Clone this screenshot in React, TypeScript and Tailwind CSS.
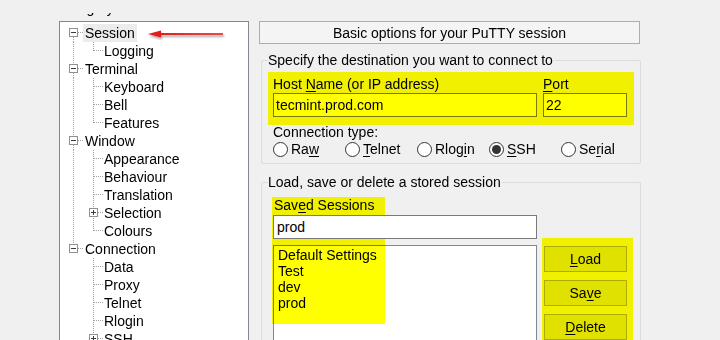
import React from "react";

const font = "font-['Liberation_Sans',Arial,sans-serif]";

type Row = {
  label: string;
  top?: boolean;
  box?: "minus" | "plus";
  trunk: "none" | "down" | "full" | "up";
  branch?: "full" | "half";
  selected?: boolean;
};

const ROWS: Row[] = [
  { label: "Session", top: true, box: "minus", trunk: "down", selected: true },
  { label: "Logging", trunk: "full", branch: "half" },
  { label: "Terminal", top: true, box: "minus", trunk: "full" },
  { label: "Keyboard", trunk: "full", branch: "full" },
  { label: "Bell", trunk: "full", branch: "full" },
  { label: "Features", trunk: "full", branch: "half" },
  { label: "Window", top: true, box: "minus", trunk: "full" },
  { label: "Appearance", trunk: "full", branch: "full" },
  { label: "Behaviour", trunk: "full", branch: "full" },
  { label: "Translation", trunk: "full", branch: "full" },
  { label: "Selection", trunk: "full", branch: "full", box: "plus" },
  { label: "Colours", trunk: "full", branch: "half" },
  { label: "Connection", top: true, box: "minus", trunk: "up" },
  { label: "Data", trunk: "none", branch: "full" },
  { label: "Proxy", trunk: "none", branch: "full" },
  { label: "Telnet", trunk: "none", branch: "full" },
  { label: "Rlogin", trunk: "none", branch: "full" },
  { label: "SSH", trunk: "none", branch: "full", box: "plus" },
];

const DOT = { stroke: "#a0a0a0", strokeDasharray: "1 1", shapeRendering: "crispEdges" as const };

function Box({ x, kind }: { x: number; kind: "minus" | "plus" }) {
  // 9x9 expander box, x = left pixel
  return (
    <g shapeRendering="crispEdges">
      <rect x={x + 0.5} y={4.5} width={8} height={8} fill="#fff" stroke="#919191" />
      <line x1={x + 2} x2={x + 7} y1={8.5} y2={8.5} stroke="#3c3c3c" />
      {kind === "plus" && <line x1={x + 4.5} x2={x + 4.5} y1={6} y2={11} stroke="#3c3c3c" />}
    </g>
  );
}

function TreeRow({ row }: { row: Row }) {
  if (row.top) {
    return (
      <div className="flex h-[18px] items-center">
        <svg width="23" height="18" className="shrink-0">
          {(row.trunk === "full" || row.trunk === "up") && <line x1={13.5} x2={13.5} y1={0} y2={4} {...DOT} />}
          {(row.trunk === "full" || row.trunk === "down") && <line x1={13.5} x2={13.5} y1={13} y2={18} {...DOT} />}
          <line x1={18} x2={23} y1={8.5} y2={8.5} {...DOT} />
          <Box x={9} kind={row.box ?? "minus"} />
        </svg>
        <span className={`px-[2px] leading-[18px] ${row.selected ? "bg-[#ececec]" : ""}`}>{row.label}</span>
      </div>
    );
  }
  return (
    <div className="flex h-[18px] items-center">
      <svg width="44" height="18" className="shrink-0">
        {row.trunk === "full" && <line x1={13.5} x2={13.5} y1={0} y2={18} {...DOT} />}
        <line x1={33.5} x2={33.5} y1={0} y2={row.branch === "half" ? 9 : 18} {...DOT} />
        <line x1={row.box ? 38 : 34} x2={44} y1={8.5} y2={8.5} {...DOT} />
        {row.box && <Box x={29} kind={row.box} />}
      </svg>
      <span className="leading-[18px]">{row.label}</span>
    </div>
  );
}

function Radio({ children, checked }: { children: React.ReactNode; checked?: boolean }) {
  return (
    <div className="flex w-[72px] items-center gap-[3px]">
      <span className="flex h-[15px] w-[15px] items-center justify-center rounded-full border border-[#333333] bg-white">
        {checked && <span className="h-[9px] w-[9px] rounded-full bg-[#333333]" />}
      </span>
      <span>{children}</span>
    </div>
  );
}

const U = ({ children }: { children: React.ReactNode }) => <span className="underline decoration-1 underline-offset-2">{children}</span>;

function Button({ children }: { children: React.ReactNode }) {
  return (
    <div className="flex h-[26px] shrink-0 items-center justify-center border border-[#adadad] bg-[#e1e1e1]">{children}</div>
  );
}

export default function App() {
  return (
    <div className={`relative isolate flex h-[340px] w-[720px] overflow-hidden bg-[#f0f0f0] text-[14px] leading-[16px] text-black ${font}`}>
      {/* category tree */}
      <div className="ml-[59px] flex w-[190px] flex-col">
        {/* label is cut off by the top of the shot: only its descenders show */}
        <div className="h-[21px] shrink-0 pt-[13px]">
          <div className="relative h-[6px] overflow-hidden">
            <div className="absolute -left-[2px] -top-[13px] whitespace-nowrap">Category:</div>
          </div>
        </div>
        <div className="flex-1 border-l border-r border-t border-[#828790] bg-white pt-[2px]">
          {ROWS.map((r) => (
            <TreeRow key={r.label} row={r} />
          ))}
        </div>
      </div>

      {/* session panel */}
      <div className="ml-[10px] mt-[21px] flex w-[382px] flex-col">
        <div className="flex h-[23px] w-[381px] shrink-0 items-center justify-center border border-[#adadad] bg-[#f4f4f4]">
          Basic options for your PuTTY session
        </div>

        <div className="ml-[2px] mt-[16px] flex w-[380px] shrink-0 flex-col rounded-[2px] border border-[#dcdcdc] pb-[5px]">
          <div className="-mt-[9px] ml-[6px] self-start bg-[#f0f0f0] pr-[1px]">Specify the destination you want to connect to</div>
          <div className="ml-[11px] mt-[8px] flex gap-[6px]">
            <div className="flex w-[264px] flex-col">
              <div>
                Host <U>N</U>ame (or IP address)
              </div>
              <div className="mt-[1px] flex h-[24px] items-center border border-[#7a7a7a] bg-white pl-[2px]">tecmint.prod.com</div>
            </div>
            <div className="flex w-[84px] flex-col">
              <div>
                <U>P</U>ort
              </div>
              <div className="mt-[1px] flex h-[24px] items-center border border-[#7a7a7a] bg-white pl-[2px]">22</div>
            </div>
          </div>
          <div className="ml-[11px] mt-[7px]">Connection type:</div>
          <div className="ml-[11px] flex h-[18px] items-center">
            <Radio>
              Ra<U>w</U>
            </Radio>
            <Radio>
              <U>T</U>elnet
            </Radio>
            <Radio>
              Rlog<U>i</U>n
            </Radio>
            <Radio checked>
              <U>S</U>SH
            </Radio>
            <Radio>
              Se<U>r</U>ial
            </Radio>
          </div>
        </div>

        <div className="ml-[2px] mt-[18px] flex min-h-0 w-[380px] flex-1 flex-col rounded-t-[2px] border-l border-r border-t border-[#dcdcdc]">
          <div className="-mt-[9px] ml-[6px] self-start bg-[#f0f0f0] pr-[1px]">Load, save or delete a stored session</div>
          <div className="ml-[11px] mt-[7px] flex gap-[7px]">
            <div className="flex w-[264px] flex-col">
              <div className="pl-[1px]">
                Sav<U>e</U>d Sessions
              </div>
              <div className="relative z-10 mt-[2px] flex h-[24px] shrink-0 items-center border border-[#7a7a7a] bg-white pl-[3px]">prod</div>
              <div className="mt-[6px] h-[120px] shrink-0 border border-[#828790] bg-white pl-[4px] pt-[1px]">
                <div>Default Settings</div>
                <div>Test</div>
                <div>dev</div>
                <div>prod</div>
              </div>
            </div>
            <div className="mt-[49px] flex w-[83px] flex-col gap-[8px]">
              <Button>
                <U>L</U>oad
              </Button>
              <Button>
                Sa<U>v</U>e
              </Button>
              <Button>
                <U>D</U>elete
              </Button>
            </div>
          </div>
        </div>
      </div>

      {/* highlighter marks */}
      <div className="pointer-events-none absolute left-[268px] top-[72px] h-[53px] w-[366px] bg-[#ffff00] mix-blend-multiply" />
      <div className="pointer-events-none absolute left-[272px] top-[197px] h-[127px] w-[113px] bg-[#ffff00] mix-blend-multiply" />
      <div className="pointer-events-none absolute left-[542px] top-[238px] h-[110px] w-[91px] bg-[#ffff00] mix-blend-multiply" />

      {/* red arrow */}
      <svg className="pointer-events-none absolute left-[140px] top-[24px]" width="92" height="22">
        <defs>
          <filter id="sh" x="-20%" y="-50%" width="140%" height="200%">
            <feDropShadow dx="1" dy="2" stdDeviation="1.2" floodColor="#000" floodOpacity="0.35" />
          </filter>
          <linearGradient id="fade" gradientUnits="userSpaceOnUse" x1="18" x2="83" y1="0" y2="0">
            <stop offset="0" stopColor="#e41c1c" />
            <stop offset="1" stopColor="#ec4a4a" />
          </linearGradient>
        </defs>
        <g filter="url(#sh)">
          <rect x={18} y={9} width={65} height={2} fill="url(#fade)" />
          <polygon points="8,10 21,6.5 21,13.5" fill="#e41c1c" />
        </g>
      </svg>
    </div>
  );
}
